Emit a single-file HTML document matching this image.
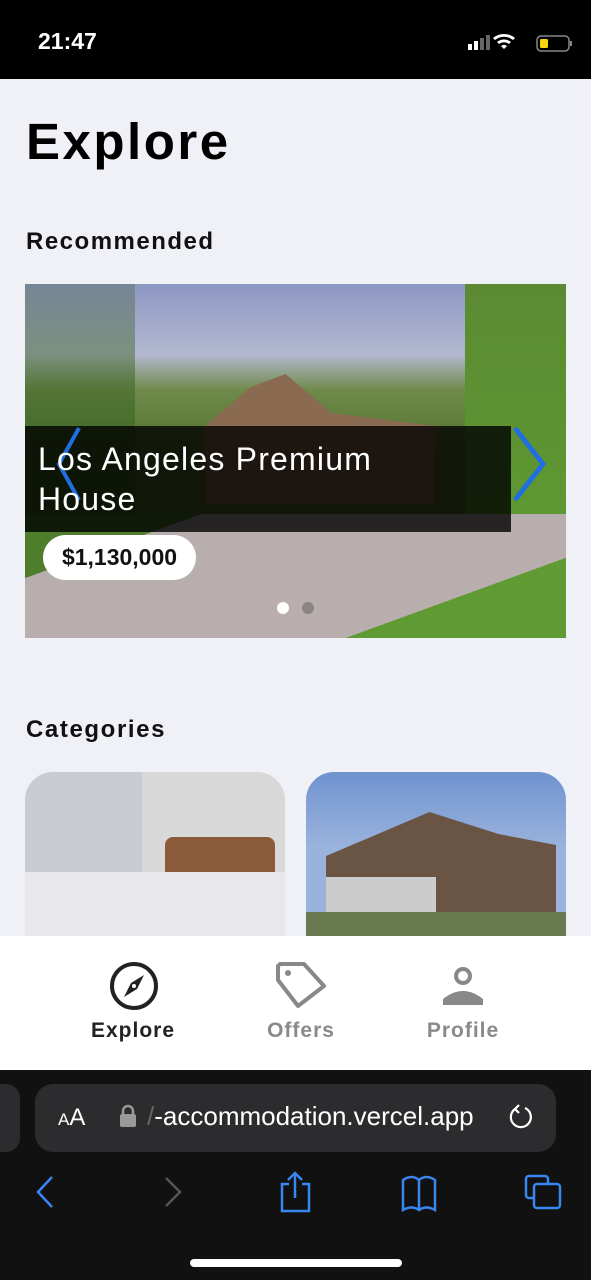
<!DOCTYPE html>
<html><head><meta charset="utf-8"><style>
*{margin:0;padding:0;box-sizing:border-box}
body{width:591px;height:1280px;overflow:hidden;background:#f0f1f6;font-family:"Liberation Sans",sans-serif;position:relative}
.abs{position:absolute}
</style></head><body>
<div class="abs" style="left:0;top:0;width:591px;height:79px;background:#000"></div>
<div class="abs" style="left:38px;top:28px;color:#fff;font-size:23px;font-weight:bold">21:47</div>
<svg class="abs" style="left:466px;top:32px" width="110" height="22">
<rect x="2" y="12" width="4" height="6" fill="#fff"/><rect x="8" y="9" width="4" height="9" fill="#fff"/><rect x="14" y="6" width="4" height="12" fill="#666"/><rect x="20" y="3" width="4" height="15" fill="#666"/>
<path d="M38 17 l3-3 a5 5 0 0 0-6 0z M33 12 a8 8 0 0 1 10 0 l2-2 a11 11 0 0 0-14 0z M29 8 a14 14 0 0 1 18 0 l2-2 a17 17 0 0 0-22 0z" fill="#fff"/>
<rect x="71" y="4" width="32" height="15" rx="4" fill="none" stroke="#888" stroke-width="1.5"/><rect x="74" y="7" width="8" height="9" rx="1.5" fill="#f5d90a"/><rect x="104" y="9" width="2" height="5" fill="#888"/>
</svg>
<div class="abs" style="left:26px;top:112px;font-size:51px;font-weight:900;color:#000;letter-spacing:2.5px">Explore</div>
<div class="abs" style="left:26px;top:228px;font-size:24px;font-weight:bold;color:#111;letter-spacing:1.5px">Recommended</div>
<div class="abs" style="left:25px;top:284px;width:541px;height:354px;overflow:hidden;background:linear-gradient(180deg,#8d97c3 0%,#b3b8d0 20%,#6f8a4a 30%,#4f6f2c 50%,#5d6b33 70%,#6a8a3a 100%)">
 <div class="abs" style="left:0;top:0;width:110px;height:300px;background:linear-gradient(180deg,rgba(60,90,40,.3),#3d6a22)"></div>
 <div class="abs" style="left:440px;top:0;width:101px;height:260px;background:linear-gradient(180deg,#5c8a33,#5e9a30)"></div>
 <div class="abs" style="left:180px;top:90px;width:230px;height:130px;background:#8a6a50;clip-path:polygon(0 40%,20% 10%,35% 0,55% 30%,100% 40%,100% 100%,0 100%)"></div>
 <div class="abs" style="left:0;top:230px;width:541px;height:124px;background:linear-gradient(160deg,#4e7d2b 0 20%,#b8aeae 20% 75%,#5f9a33 75%)"></div>
 <div class="abs" style="left:0;top:142px;width:486px;height:106px;background:rgba(0,0,0,.8)"></div>
 <svg class="abs" style="left:28px;top:140px" width="30" height="80"><path d="M26 4 L6 40 L26 76" fill="none" stroke="#1f6fe0" stroke-width="4"/></svg>
 <svg class="abs" style="left:486px;top:140px" width="40" height="80"><path d="M4 4 L32 40 L4 76" fill="none" stroke="#1f6fe0" stroke-width="5"/></svg>
 <div class="abs" style="left:13px;top:155px;color:#fff;font-size:32px;line-height:40px;font-weight:500;letter-spacing:1.2px;white-space:nowrap">Los Angeles Premium<br>House</div>
 <div class="abs" style="left:18px;top:251px;width:153px;height:45px;background:#fff;border-radius:23px;font-size:23px;font-weight:bold;line-height:45px;text-align:center;color:#111">$1,130,000</div>
 <div class="abs" style="left:252px;top:318px;width:12px;height:12px;border-radius:50%;background:#fff"></div>
 <div class="abs" style="left:277px;top:318px;width:12px;height:12px;border-radius:50%;background:#8a8486"></div>
</div>
<div class="abs" style="left:26px;top:716px;font-size:24px;font-weight:bold;color:#111;letter-spacing:1.6px">Categories</div>
<div class="abs" style="left:25px;top:772px;width:260px;height:190px;border-radius:28px;overflow:hidden;background:linear-gradient(90deg,#c8ccd2 0 45%,#d8d8d8 45% 100%)">
 <div class="abs" style="left:140px;top:65px;width:110px;height:60px;background:#8a5a3a;border-radius:8px"></div>
 <div class="abs" style="left:0;top:100px;width:260px;height:90px;background:#e8e8ec"></div>
</div>
<div class="abs" style="left:306px;top:772px;width:260px;height:190px;border-radius:28px;overflow:hidden;background:linear-gradient(180deg,#6f92cf 0,#9ab3dc 40%)">
 <div class="abs" style="left:20px;top:40px;width:230px;height:110px;background:#6a5545;clip-path:polygon(0 40%,45% 0,75% 20%,100% 30%,100% 100%,0 100%)"></div>
 <div class="abs" style="left:20px;top:105px;width:110px;height:40px;background:#ccc"></div>
 <div class="abs" style="left:0;top:140px;width:260px;height:50px;background:#6a7a50"></div>
</div>
<div class="abs" style="left:0;top:936px;width:591px;height:134px;background:#fff"></div>
<svg class="abs" style="left:108px;top:960px" width="52" height="52"><circle cx="26" cy="26" r="22" fill="none" stroke="#222" stroke-width="4"/><path d="M36 15 L29 29 L16 37 L23 23z" fill="#222"/><circle cx="26" cy="26" r="2" fill="#fff"/></svg>
<svg class="abs" style="left:274px;top:960px" width="54" height="52"><path d="M4 6 L4 20 L24 46 L50 26 L30 4 L6 4z" fill="none" stroke="#888" stroke-width="4" stroke-linejoin="round"/><circle cx="14" cy="13" r="3" fill="#888"/></svg>
<svg class="abs" style="left:440px;top:965px" width="46" height="42"><circle cx="23" cy="11" r="7" fill="none" stroke="#888" stroke-width="4"/><path d="M3 40 L3 34 Q23 18 43 34 L43 40z" fill="#888"/></svg>
<div class="abs" style="left:0;top:1019px;width:266px;text-align:center;font-size:21px;font-weight:bold;color:#222;letter-spacing:1px">Explore</div>
<div class="abs" style="left:201px;top:1019px;width:200px;text-align:center;font-size:21px;font-weight:bold;color:#8a8a8a;letter-spacing:1px">Offers</div>
<div class="abs" style="left:363px;top:1019px;width:200px;text-align:center;font-size:21px;font-weight:bold;color:#8a8a8a;letter-spacing:1px">Profile</div>
<div class="abs" style="left:0;top:1070px;width:591px;height:210px;background:#111"></div>
<div class="abs" style="left:-20px;top:1084px;width:40px;height:68px;border-radius:14px;background:#2c2c2e"></div>
<div class="abs" style="left:35px;top:1084px;width:521px;height:68px;border-radius:18px;background:#2c2c2e"></div>
<div class="abs" style="left:58px;top:1104px;color:#fff;font-size:24px"><span style="font-size:17px">A</span>A</div>
<svg class="abs" style="left:119px;top:1104px" width="18" height="24"><path d="M4 10 V7 a5 5 0 0 1 10 0 V10" fill="none" stroke="#999" stroke-width="2.5"/><rect x="1" y="10" width="16" height="13" rx="2" fill="#999"/></svg>
<div class="abs" style="left:147px;top:1101px;color:#fff;font-size:26px"><span style="color:#666">/</span>-accommodation.vercel.app</div>
<svg class="abs" style="left:506px;top:1102px" width="30" height="30"><path d="M19 6 A10 10 0 1 1 9 7" fill="none" stroke="#fff" stroke-width="2.2"/><path d="M13 3 L9 7 L13 11" fill="none" stroke="#fff" stroke-width="2.2"/></svg>
<svg class="abs" style="left:30px;top:1170px" width="540" height="44" fill="none" stroke-width="2.5">
<path d="M22 7 L8 22 L22 37" stroke="#3a86f0"/>
<path d="M136 8 L150 22 L136 36" stroke="#555"/>
<path d="M259 14 H252 V41 H279 V14 H272 M265 28 V3 M258 10 L265 3 L272 10" stroke="#3a86f0"/>
<path d="M373 40 V10 Q382 4 389 10 Q396 4 405 10 V40 Q396 35 389 40 Q382 35 373 40z M389 10 V40" stroke="#3a86f0"/>
<rect x="496" y="6" width="22" height="22" rx="3" stroke="#3a86f0"/><rect x="504" y="14" width="26" height="24" rx="3" stroke="#3a86f0" fill="#111"/>
</svg>
<div class="abs" style="left:190px;top:1259px;width:212px;height:8px;border-radius:4px;background:#fff"></div>
</body></html>
